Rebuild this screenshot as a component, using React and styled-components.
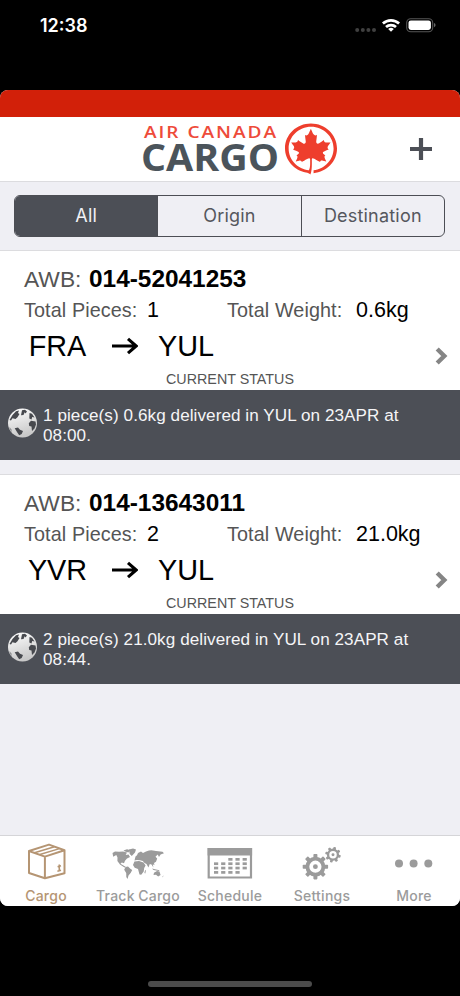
import React, { useState } from "react";
import styled, { createGlobalStyle } from "styled-components";
import { SiAircanada } from "react-icons/si";

const GlobalStyle = createGlobalStyle`
  body {
    margin: 0;
    background: #000;
  }
  * {
    box-sizing: border-box;
  }
`;

const Screen = styled.div`
  display: flex;
  flex-direction: column;
  width: 460px;
  height: 996px;
  background: #000;
  font-family: "Liberation Sans", Arial, sans-serif;
  overflow: hidden;
`;

const StatusBar = styled.div`
  display: flex;
  justify-content: space-between;
  flex: 0 0 90px;
  padding: 15px 24px 0 40px;
`;

const Clock = styled.div`
  height: 22px;
  line-height: 22px;
  font-family: Inter, sans-serif;
  font-weight: 600;
  font-size: 18px;
  color: #fff;
`;

const StatusIcons = styled.svg`
  width: 82px;
  height: 22px;
`;

const AppWindow = styled.div`
  display: flex;
  flex-direction: column;
  flex: 0 0 816px;
  background: #efeff4;
  border-radius: 8px;
  overflow: hidden;
`;

const RedStrip = styled.div`
  flex: 0 0 27px;
  background: #d22009;
`;

const Header = styled.div`
  display: flex;
  justify-content: space-between;
  align-items: center;
  flex: 0 0 65px;
  padding: 0 27px 0 142px;
  background: #fff;
  border-bottom: 1px solid #dcdcdf;
`;

const Logo = styled.div`
  display: flex;
  align-items: center;
  gap: 4px;
`;

const Wordmark = styled.svg`
  width: 139px;
  height: 64px;
  overflow: visible;
`;

const Rondelle = styled(SiAircanada)`
  width: 52px;
  height: 52px;
  color: #ee3e2d;
`;

const AddButton = styled.button`
  display: flex;
  padding: 0;
  border: none;
  background: none;
`;

const FilterBar = styled.div`
  display: flex;
  flex: 0 0 68px;
  padding: 13px 15px 0 14px;
`;

const Segments = styled.div`
  display: flex;
  flex: 1;
  height: 42px;
  border: 1.5px solid #4c4e54;
  border-radius: 6px;
  overflow: hidden;
`;

const Segment = styled.button`
  flex: 1;
  padding: 0 0 1px;
  border: none;
  border-left: ${(props) => (props.$first ? "none" : "1px solid #4c4e54")};
  background: ${(props) => (props.$active ? "#4c4f56" : "transparent")};
  color: ${(props) => (props.$active ? "#f1f1f5" : "#55575d")};
  font-family: Inter, sans-serif;
  font-size: 18px;
  letter-spacing: 0.2px;
`;

const Shipment = styled.div`
  flex: 0 0 210px;
  margin-bottom: 14px;
  background: #fff;
  border-top: 1px solid #dcdcdf;
`;

const Details = styled.div`
  height: 139px;
  padding: 12px 13px 0 24px;
`;

const AwbRow = styled.div`
  display: grid;
  grid-template-columns: 65px 1fr;
  height: 32px;
  line-height: 32px;
  font-size: 22.8px;
  color: #555;
`;

const AwbNumber = styled.strong`
  font-size: 24.4px;
  color: #000;
`;

const TotalsRow = styled.div`
  display: grid;
  grid-template-columns: 123px 80px 129px 1fr;
  height: 29px;
  line-height: 30px;
  font-size: 19.8px;
  letter-spacing: 0.1px;
  color: #555;
`;

const Amount = styled.span`
  font-size: 21.5px;
  letter-spacing: 0;
  color: #000;
`;

const RouteRow = styled.div`
  display: grid;
  grid-template-columns: 67px 1fr 12px;
  height: 44px;
  line-height: 44px;
  font-size: 28.8px;
  color: #000;
`;

const Origin = styled.span`
  text-align: center;
`;

const Leg = styled.span`
  display: flex;
  align-items: center;
  gap: 20px;
  padding-left: 21px;
`;

const Chevron = styled.svg`
  align-self: end;
  width: 13px;
  height: 18px;
  margin-bottom: 3px;
`;

const StatusCaption = styled.div`
  height: 22px;
  margin-right: 11px;
  line-height: 22px;
  text-align: center;
  font-size: 14.3px;
  color: #555;
`;

const StatusNote = styled.div`
  display: flex;
  height: 70px;
  padding: 16px 40px 0 7px;
  gap: 6px;
  background: #4c4f56;
  color: #f5f5f7;
  font-size: 17.1px;
  line-height: 20px;
  letter-spacing: 0.07px;
`;

const GlobeIcon = styled.svg`
  flex: 0 0 30px;
  height: 30px;
  margin-top: 2px;
`;

const TabBar = styled.div`
  display: grid;
  grid-template-columns: repeat(5, 1fr);
  flex: 0 0 71px;
  margin-top: auto;
  background: #fff;
  border-top: 1px solid #d5d5d8;
`;

const Tab = styled.button`
  display: flex;
  flex-direction: column;
  align-items: center;
  padding: 7px 0 0;
  border: none;
  background: none;
  color: ${(props) => (props.$active ? "#b59573" : "#9b9b9b")};
  font-family: Inter, sans-serif;
  font-weight: 500;
  font-size: 14px;
  line-height: 18px;
  letter-spacing: 0.25px;
  word-spacing: -0.5px;
  white-space: nowrap;
`;

const TabIcon = styled.svg`
  width: 60px;
  height: 40px;
  margin-bottom: 4px;
`;

const HomeArea = styled.div`
  display: flex;
  justify-content: center;
  align-items: flex-end;
  flex: 1;
  padding-bottom: 9px;
`;

const HomeIndicator = styled.div`
  width: 164px;
  height: 6px;
  border-radius: 3px;
  background: #4b4b4b;
`;

const shipments = [
  {
    awb: "014-52041253",
    pieces: 1,
    weight: "0.6kg",
    from: "FRA",
    to: "YUL",
    note: "1 piece(s) 0.6kg delivered in YUL on 23APR at 08:00.",
  },
  {
    awb: "014-13643011",
    pieces: 2,
    weight: "21.0kg",
    from: "YVR",
    to: "YUL",
    note: "2 piece(s) 21.0kg delivered in YUL on 23APR at 08:44.",
  },
];

// first and last column shown in each week row
const calendarRows = [
  [2, 4],
  [0, 4],
  [0, 4],
  [0, 3],
];

const Calendar = () => (
  <g fill="currentColor">
    <path d="M8.7 6H51V34.5H8.7Z" fill="none" stroke="currentColor" strokeWidth="2.2" />
    <path d="M7.6 5H52.1V12.6H7.6Z" />
    {calendarRows.map(([first, last], row) =>
      [0, 1, 2, 3, 4]
        .filter((col) => col >= first && col <= last)
        .map((col) => (
          <rect key={`${row}-${col}`} x={14 + col * 7.15} y={15 + row * 4.35} width="4.2" height="2.7" />
        ))
    )}
  </g>
);

const Gear = ({ x, y, r, teeth, width, rotate }) => (
  <g transform={`translate(${x} ${y})`}>
    {Array.from({ length: teeth }, (_, i) => (
      <rect
        key={i}
        x={-width / 2}
        y={-r}
        width={width}
        height={r * 0.4}
        rx="0.8"
        fill="currentColor"
        transform={`rotate(${(i * 360) / teeth + rotate})`}
      />
    ))}
    <circle r={r * 0.63} fill="none" stroke="currentColor" strokeWidth={r * 0.3} />
    <circle r={r * 0.19} fill="currentColor" />
  </g>
);

const tabs = [
  {
    name: "Cargo",
    icon: (
      <g fill="none" stroke="currentColor" strokeWidth="2" strokeLinejoin="round">
        <path d="M13 8 33 1.6 48.5 7.3V30.2L28.9 35.2 13 30ZM13 8 28.9 13.6 48.5 7.3M28.9 13.6V35.2" />
        <path d="M18.5 9.8 38.5 3.8M23.8 11.5 43.5 5.6" strokeWidth="1.5" />
        <path d="M43.3 21.5V28M41.6 23.8 45 22.8M41.4 28.2 45 27.2" strokeWidth="1.6" />
      </g>
    ),
  },
  {
    name: "Track Cargo",
    icon: (
      <g fill="currentColor" transform="translate(0 -0.6)">
        <path d="M4.5 10.5 7 9 11 9.4 15 9.2 19 10.2 17.7 12.7 20.5 12.2 22 14.5 19 16 17 18.3 16 20.8 13.8 20 12.5 21.3 15.5 23.2 18 24.5 16.5 25 12 22.2 9.4 18.5 9.5 15 8.3 12.7 5.2 14.3Z" />
        <path d="M15.5 8 19 6.8 22 7.7 20.5 10 17 9ZM21 7 25 6 28 7 27 10 23.8 13.5 21.7 11.5Z" />
        <path d="M17.5 24.5 20 24.1 22.3 26.3 24.2 27.5 22.8 30.4 20.5 33 19.5 36.5 18.3 34.5 18.2 30.5 16.2 27.3Z" />
        <path d="M27.5 14.2 29 12.8 30 10.5 33 9 35 10.5 38 9 41 8 43.5 7.8 48 8.5 54.5 9.3 56 10.8 52.6 12 51 14.5 49.7 12.2 47.5 14.3 49.2 16.2 48 19.3 46 20.5 46.5 22.8 44.8 21.8 45.4 25 43.5 22 41.8 21.6 40.4 25 38.5 21.5 36.5 20.7 34.8 18.7 32 17.8 29 17.7 26.5 18.2Z" />
        <path d="M26.4 19 31 18.5 35.5 20 37.6 23 36.2 25.5 35.7 29 33.2 32.3 31.5 32 30 26.7 26.7 25.4 25 22.5ZM37 28 38 27.5 37.3 31 36.4 30.7Z" />
        <path d="M44 26 48 27 51.5 27.8 51 28.5 45.5 27.5ZM46 30.3 49 28.5 51.5 29.2 52.6 32.5 50.2 34 48 32.3 45.5 32.5ZM54.5 34 55.3 32.8 55 35.2Z" />
      </g>
    ),
  },
  {
    name: "Schedule",
    icon: <Calendar />,
  },
  {
    name: "Settings",
    icon: (
      <g>
        <Gear x={23.4} y={23.7} r={12.7} teeth={8} width={4} rotate={0} />
        <Gear x={41} y={11.7} r={7.8} teeth={8} width={2.7} rotate={14} />
      </g>
    ),
  },
  {
    name: "More",
    icon: (
      <g fill="currentColor">
        <circle cx="15" cy="20.4" r="4" />
        <circle cx="29.6" cy="20.4" r="4" />
        <circle cx="44.3" cy="20.4" r="4" />
      </g>
    ),
  },
];

function Globe({ id }) {
  return (
    <GlobeIcon viewBox="0 0 30 30">
      <defs>
        <linearGradient id={id} x1="0" y1="0" x2="0.3" y2="1">
          <stop offset="0" stopColor="#fff" />
          <stop offset="1" stopColor="#c9c9c9" />
        </linearGradient>
      </defs>
      <circle cx="15.5" cy="15" r="14.5" fill={`url(#${id})`} />
      <g fill="#47494e">
        <path d="M5.5 7 9 3.2 12 2.5 11 5 12.5 6 10.5 9.3 8.5 11 5.5 10.3 4 12.5 2.5 12Z" />
        <path d="M15 2.2 18 1.8 20 3.5 18.5 5.5 17.7 4.2 16.5 7 14 7.2Z" />
        <path d="M22.5 5 25 5.8 27.5 9.5 25.2 9 24.5 11.5 22.3 10.5Z" />
        <path d="M7.7 20.3 11 19.6 13 21.7 16 23 14.7 26 12.2 27.3 10.3 24.5Z" />
        <path d="M21.8 15.2 24 12.8 28.5 13.5 29 16.5 27.5 20.5 25 23 24.5 18.5 22.2 18Z" />
        <path d="M2.5 19 4.5 21.5 4.8 24.2 2.5 21Z" opacity=".5" />
      </g>
    </GlobeIcon>
  );
}

function ShipmentCard({ shipment }) {
  return (
    <Shipment>
      <Details>
        <AwbRow>
          AWB: <AwbNumber>{shipment.awb}</AwbNumber>
        </AwbRow>
        <TotalsRow>
          <span>Total Pieces:</span>
          <Amount>{shipment.pieces}</Amount>
          <span>Total Weight:</span>
          <Amount>{shipment.weight}</Amount>
        </TotalsRow>
        <RouteRow>
          <Origin>{shipment.from}</Origin>
          <Leg>
            <svg width="26" height="18" viewBox="0 0 26 18">
              <path d="M0 9H24M16 1.8 24.2 9 16 16.2" fill="none" stroke="#000" strokeWidth="3.1" />
            </svg>
            {shipment.to}
          </Leg>
          <Chevron viewBox="0 0 13 18">
            <path d="M2.2 2 9.3 9 2.2 16" fill="none" stroke="#858585" strokeWidth="4.4" />
          </Chevron>
        </RouteRow>
        <StatusCaption>CURRENT STATUS</StatusCaption>
      </Details>
      <StatusNote>
        <Globe id={`globe-${shipment.awb}`} />
        {shipment.note}
      </StatusNote>
    </Shipment>
  );
}

function App() {
  const [filter, setFilter] = useState("All");
  const [tab, setTab] = useState("Cargo");

  return (
    <Screen>
      <GlobalStyle />
      <StatusBar>
        <Clock>12:38</Clock>
        <StatusIcons viewBox="0 0 82 22">
          <g fill="#404040">
            <circle cx="3.2" cy="15" r="2" />
            <circle cx="8.8" cy="15" r="2" />
            <circle cx="14.4" cy="15" r="2" />
            <circle cx="20" cy="15" r="2" />
          </g>
          <g fill="none" stroke="#fff" strokeWidth="2.7">
            <path d="M28.9 8.5A12 12 0 0 1 45.1 8.5" />
            <path d="M32 12A7.5 7.5 0 0 1 42 12" />
          </g>
          <path d="M34.2 13.9A4.3 4.3 0 0 1 39.8 13.9L37 16.8Z" fill="#fff" />
          <rect x="52.7" y="3.7" width="26" height="13" rx="4" fill="none" stroke="#555" strokeWidth="1.1" />
          <rect x="54.5" y="5.4" width="22.4" height="9.6" rx="2.4" fill="#fff" />
          <path d="M80 8V12.3Q81.6 11.6 81.6 10.1T80 8Z" fill="#666" />
        </StatusIcons>
      </StatusBar>

      <AppWindow>
        <RedStrip />
        <Header>
          <Logo>
            <Wordmark viewBox="0 0 139 64" fontFamily="Open Sans, sans-serif">
              <text x="2" y="21.4" fontSize="15.6" fontWeight="600" fill="#ee4b3a" letterSpacing="1.6" textLength="134" lengthAdjust="spacingAndGlyphs">
                AIR CANADA
              </text>
              <text x="-1" y="54" fontSize="37" fontWeight="700" fill="#4b545b" textLength="138" lengthAdjust="spacingAndGlyphs">
                CARGO
              </text>
            </Wordmark>
            <Rondelle />
          </Logo>
          <AddButton aria-label="Add">
            <svg width="24" height="24" viewBox="0 0 24 24">
              <path d="M12 1V23M1 12H23" stroke="#4c4f56" strokeWidth="4.2" />
            </svg>
          </AddButton>
        </Header>

        <FilterBar>
          <Segments>
            {["All", "Origin", "Destination"].map((name, i) => (
              <Segment key={name} $first={i === 0} $active={name === filter} onClick={() => setFilter(name)}>
                {name}
              </Segment>
            ))}
          </Segments>
        </FilterBar>

        {shipments.map((shipment) => (
          <ShipmentCard key={shipment.awb} shipment={shipment} />
        ))}

        <TabBar>
          {tabs.map(({ name, icon }) => (
            <Tab key={name} $active={name === tab} onClick={() => setTab(name)}>
              <TabIcon viewBox="0 0 60 40">{icon}</TabIcon>
              {name}
            </Tab>
          ))}
        </TabBar>
      </AppWindow>

      <HomeArea>
        <HomeIndicator />
      </HomeArea>
    </Screen>
  );
}

export default App;
